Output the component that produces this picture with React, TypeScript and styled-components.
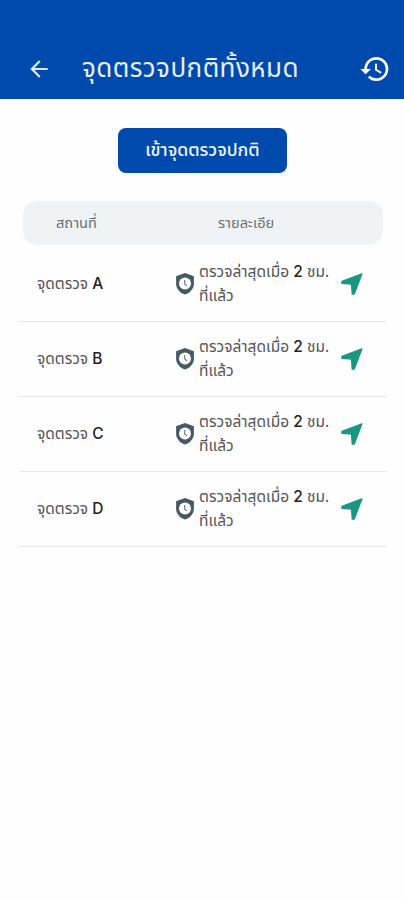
import React from "react";
import styled, { createGlobalStyle } from "styled-components";
import { MdArrowBack, MdHistory } from "react-icons/md";

const GlobalStyle = createGlobalStyle`
  * { box-sizing: border-box; }
  body {
    margin: 0;
    background: #fefefe;
    font-family: "Noto Sans Thai", "Noto Sans", "Inter", sans-serif;
  }
`;

const Screen = styled.main`
  width: 404px;
  height: 900px;
  overflow: hidden;
  display: flex;
  flex-direction: column;
  background: #fefefe;
`;

const AppBar = styled.header`
  height: 99px;
  flex: none;
  display: flex;
  align-items: center;
  padding: 38px 13px 0 26px;
  background: #004aad;
  color: #e9effa;
`;

const Title = styled.h1`
  margin: 0 auto 0 30px;
  font-size: 26px;
  font-weight: 400;
  letter-spacing: 0.45px;
  line-height: 38px;
  white-space: nowrap;
`;

const IconButton = styled.button<{ $bright?: boolean }>`
  display: flex;
  padding: 0;
  border: 0;
  background: none;
  color: ${(p) => (p.$bright ? "#ffffff" : "#dfe8f7")};
`;

const EnterButton = styled.button`
  width: 169px;
  height: 45px;
  flex: none;
  margin: 29px 0 0 118px;
  padding: 0;
  border: 0;
  border-radius: 8px;
  background: #004aad;
  color: #f2f6fd;
  font: inherit;
  font-size: 17.7px;
  font-weight: 500;
  white-space: nowrap;
`;

const TableHead = styled.div`
  height: 44px;
  flex: none;
  display: grid;
  grid-template-columns: 162px 1fr;
  align-items: center;
  margin: 28px 21px 2px 23px;
  padding: 1px 0 0 33px;
  border-radius: 14px;
  background: #eff3f6;
  color: #6b7073;
  font-size: 14.6px;
`;

const HeadCell = styled.span`
  white-space: nowrap;
`;

const Row = styled.div`
  height: 75px;
  flex: none;
  display: grid;
  grid-template-columns: 138px 24px 141px 1fr;
  align-items: center;
  margin: 0 17px 0 19px;
  padding-left: 18px;
  border-bottom: 1px solid #e8e8e8;
  color: #555555;
  font-size: 15.5px;
`;

const Place = styled.span`
  white-space: nowrap;
`;

const Latin = styled.span`
  color: #222222;
  font-family: "Inter", sans-serif;
  font-weight: 500;
`;

const Detail = styled.p`
  margin: 0;
  font-size: 15.5px;
  line-height: 24px;
  letter-spacing: 0.03px;
  white-space: nowrap;
`;

const ShieldClock = () => (
  <svg width="20" height="24" viewBox="0 0 20 24">
    <path d="M10 .9 1.1 4.2v7.2c0 5.1 3.7 9.5 8.9 11.1 5.2-1.6 8.9-6 8.9-11.1V4.2Z" fill="#455a64" />
    <circle cx="10" cy="11.4" r="6" fill="#fff" />
    <path d="M9.7 8v4l2.2 1.9" fill="none" stroke="#61737b" strokeWidth="1.1" />
  </svg>
);

const NavigateArrow = () => (
  <svg width="24" height="24" viewBox="0 0 24 24">
    <path d="M22 1.7 1.9 9.4v1.9l9.6.8.7 10h2.1Z" fill="#189780" stroke="#189780" strokeWidth="1.2" strokeLinejoin="round" />
  </svg>
);

const checkpoints = ["A", "B", "C", "D"];

export default function App() {
  return (
    <>
      <GlobalStyle />
      <Screen>
        <AppBar>
          <IconButton aria-label="ย้อนกลับ"><MdArrowBack size={26} /></IconButton>
          <Title>จุดตรวจปกติทั้งหมด</Title>
          <IconButton $bright aria-label="ประวัติ"><MdHistory size={32} /></IconButton>
        </AppBar>
        <EnterButton>เข้าจุดตรวจปกติ</EnterButton>
        <TableHead>
          <HeadCell>สถานที่</HeadCell>
          <HeadCell>รายละเอีย</HeadCell>
        </TableHead>
        {checkpoints.map((name) => (
          <Row key={name}>
            <Place>จุดตรวจ <Latin>{name}</Latin></Place>
            <ShieldClock />
            <Detail>ตรวจล่าสุดเมื่อ <Latin>2</Latin> ชม.<br />ที่แล้ว</Detail>
            <NavigateArrow />
          </Row>
        ))}
      </Screen>
    </>
  );
}
